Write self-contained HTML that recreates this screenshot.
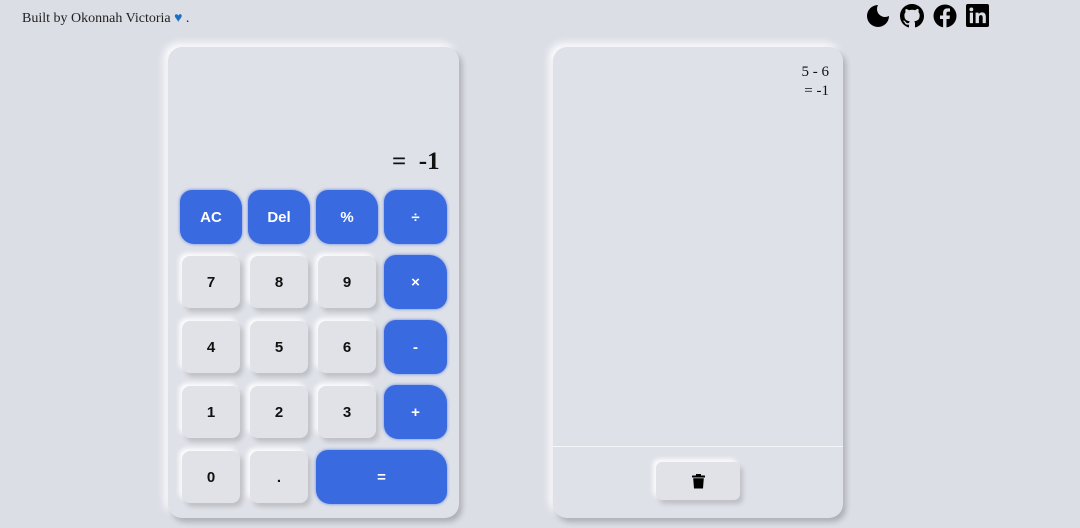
<!DOCTYPE html>
<html><head><style>
*{margin:0;padding:0;box-sizing:border-box}
body{width:1080px;height:528px;background:#dcdee6;position:relative;overflow:hidden;font-family:"Liberation Sans",sans-serif}
.credit{position:absolute;left:22px;top:11px;font-family:"Liberation Serif",serif;font-size:14px;color:#222}
.card{position:absolute;top:47px;width:291px;height:471px;background:#dfe1e8;border-radius:14px;box-shadow:3px 4px 6px rgba(0,0,0,.22),-4px -4px 8px rgba(255,255,255,.9)}
.b{position:absolute;display:flex;align-items:center;justify-content:center;font-weight:bold;font-size:15px;color:#111}
.g{background:#e0e2e8;border-radius:8px;box-shadow:3px 4px 5px rgba(0,0,0,.15),-3px -3px 5px rgba(255,255,255,.9)}
.bl{background:#3a6ae0;color:#fff;border-radius:12px 18px 12px 14px;box-shadow:0 0 3px rgba(58,106,224,.8)}
</style></head><body>
<div class="credit">Built by Okonnah Victoria <span style="color:#1e6fc0">&#9829;</span> .</div>
<svg style="position:absolute;left:866px;top:4px" width="24" height="24" viewBox="0 0 24 24"><defs><mask id="m"><rect width="24" height="24" fill="#fff"/><circle cx="19" cy="5" r="8" fill="#000"/></mask></defs><circle cx="12" cy="12" r="11" fill="#000" mask="url(#m)"/></svg>
<svg style="position:absolute;left:900px;top:4px" width="24" height="24" viewBox="0 0 16 16"><path fill="#000" d="M8 0C3.58 0 0 3.58 0 8c0 3.54 2.29 6.53 5.47 7.59.4.07.55-.17.55-.38 0-.19-.01-.82-.01-1.49-2.01.37-2.53-.49-2.69-.94-.09-.23-.48-.94-.82-1.13-.28-.15-.68-.52-.01-.53.63-.01 1.08.58 1.23.82.72 1.21 1.87.87 2.33.66.07-.52.28-.87.51-1.07-1.78-.2-3.64-.89-3.64-3.95 0-.87.31-1.59.82-2.15-.08-.2-.36-1.02.08-2.12 0 0 .67-.21 2.2.82.64-.18 1.32-.27 2-.27.68 0 1.36.09 2 .27 1.53-1.04 2.2-.82 2.2-.82.44 1.1.16 1.92.08 2.12.51.56.82 1.27.82 2.15 0 3.07-1.87 3.75-3.65 3.95.29.25.54.73.54 1.48 0 1.07-.01 1.93-.01 2.2 0 .21.15.46.55.38A8.013 8.013 0 0016 8c0-4.42-3.58-8-8-8z"/></svg>
<svg style="position:absolute;left:933px;top:4px" width="24" height="24" viewBox="0 0 24 24"><circle cx="12" cy="12" r="11.5" fill="#000"/><path d="M13.5 24V15h3l.5-3.5h-3.5V9.3c0-1 .3-1.7 1.8-1.7H17V4.5c-.3 0-1.4-.1-2.6-.1-2.6 0-4.3 1.6-4.3 4.5v2.6H7V15h3.1v9z" fill="#dcdee6"/></svg>
<svg style="position:absolute;left:966px;top:4px" width="23" height="23" viewBox="0 0 24 24"><rect width="24" height="24" rx="2" fill="#000"/><rect x="4" y="9" width="3.3" height="11" fill="#dcdee6"/><circle cx="5.6" cy="5.6" r="2" fill="#dcdee6"/><path d="M10 9h3.2v1.6c.5-.9 1.7-1.9 3.5-1.9 3.4 0 4 2.2 4 5.1V20h-3.3v-5.4c0-1.3 0-3-1.8-3s-2.1 1.4-2.1 2.9V20H10z" fill="#dcdee6"/></svg>

<div class="card" style="left:168px"></div>
<div style="position:absolute;left:392px;top:148px;font-family:'Liberation Serif',serif;font-weight:bold;font-size:25px;color:#111">= &nbsp;-1</div>
<div class="b bl" style="left:180px;top:190px;width:62px;height:54px">AC</div>
<div class="b bl" style="left:248px;top:190px;width:62px;height:54px">Del</div>
<div class="b bl" style="left:316px;top:190px;width:62px;height:54px">%</div>
<div class="b bl" style="left:384px;top:190px;width:63px;height:54px">÷</div>
<div class="b g" style="left:182px;top:256px;width:58px;height:52px">7</div>
<div class="b g" style="left:250px;top:256px;width:58px;height:52px">8</div>
<div class="b g" style="left:318px;top:256px;width:58px;height:52px">9</div>
<div class="b bl" style="left:384px;top:255px;width:63px;height:54px">×</div>
<div class="b g" style="left:182px;top:321px;width:58px;height:52px">4</div>
<div class="b g" style="left:250px;top:321px;width:58px;height:52px">5</div>
<div class="b g" style="left:318px;top:321px;width:58px;height:52px">6</div>
<div class="b bl" style="left:384px;top:320px;width:63px;height:54px">-</div>
<div class="b g" style="left:182px;top:386px;width:58px;height:52px">1</div>
<div class="b g" style="left:250px;top:386px;width:58px;height:52px">2</div>
<div class="b g" style="left:318px;top:386px;width:58px;height:52px">3</div>
<div class="b bl" style="left:384px;top:385px;width:63px;height:54px">+</div>
<div class="b g" style="left:182px;top:451px;width:58px;height:52px">0</div>
<div class="b g" style="left:250px;top:451px;width:58px;height:52px">.</div>
<div class="b bl" style="left:316px;top:450px;width:131px;height:54px">=</div>

<div class="card" style="left:553px;width:290px"></div>
<div style="position:absolute;left:700px;width:129px;top:63px;text-align:right;font-family:'Liberation Serif',serif;font-size:15px;line-height:19px;color:#111">5 - 6<br>= -1</div>
<div style="position:absolute;left:553px;top:446px;width:290px;height:1px;background:#f5f6f9"></div>
<div class="b g" style="left:656px;top:462px;width:84px;height:38px;border-radius:6px">
<svg width="13" height="15" viewBox="0 0 13 15"><rect x="0" y="1.5" width="13" height="2" rx=".5" fill="#000"/><rect x="4" y="0" width="5" height="2" fill="#000"/><path d="M1.2 4.3h10.6l-.8 10.2H2z" fill="#000"/></svg></div>
</body></html>
